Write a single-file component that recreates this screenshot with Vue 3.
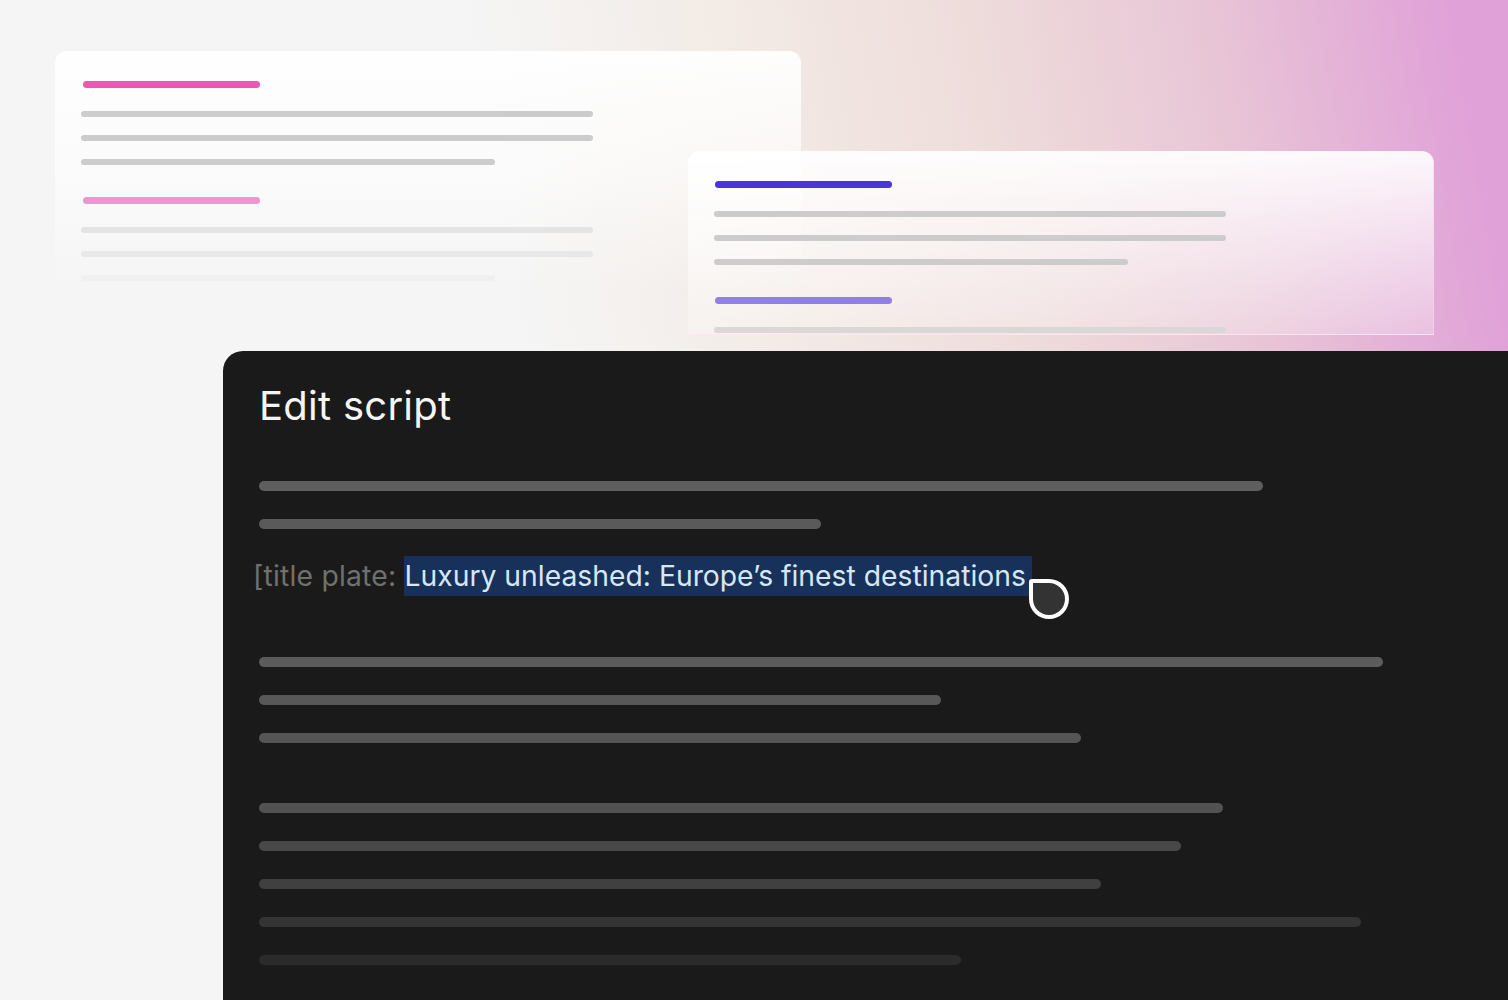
<template>
  <div class="stage">
    <div class="card card-back">
      <template v-for="(group, g) in backGroups" :key="g">
        <div class="heading" :class="group.tone"></div>
        <div class="rows">
          <div v-for="(row, i) in group.rows" :key="i" class="row" :class="row.tone" :style="{ width: row.width + 'px' }"></div>
        </div>
      </template>
    </div>

    <div class="card card-front">
      <template v-for="(group, g) in frontGroups" :key="g">
        <div class="heading" :class="group.tone"></div>
        <div class="rows">
          <div v-for="(row, i) in group.rows" :key="i" class="row" :class="row.tone" :style="{ width: row.width + 'px' }"></div>
        </div>
      </template>
    </div>

    <section class="editor">
      <h1>Edit script</h1>
      <div class="lines lines-first">
        <div v-for="(line, i) in firstLines" :key="i" class="line" :style="{ width: line.width + 'px', background: line.color }"></div>
      </div>
      <p class="script-line">
        <span class="bracket">[title plate: </span><span class="selected">Luxury unleashed: Europe’s finest destinations<span class="cursor"></span></span>
      </p>
      <div class="lines lines-second">
        <div v-for="(line, i) in secondLines" :key="i" class="line" :style="{ width: line.width + 'px', background: line.color }"></div>
      </div>
      <div class="lines lines-third">
        <div v-for="(line, i) in thirdLines" :key="i" class="line" :style="{ width: line.width + 'px', background: line.color }"></div>
      </div>
    </section>
  </div>
</template>

<script setup>
const backGroups = [
  {
    tone: 'pink',
    rows: [{ width: 512 }, { width: 512 }, { width: 414 }],
  },
  {
    tone: 'pink-soft',
    rows: [
      { width: 512, tone: 'faint' },
      { width: 512, tone: 'fainter' },
      { width: 414, tone: 'faintest' },
    ],
  },
]

const frontGroups = [
  {
    tone: 'indigo',
    rows: [{ width: 512 }, { width: 512 }, { width: 414 }],
  },
  {
    tone: 'indigo-soft',
    rows: [{ width: 512, tone: 'muted' }],
  },
]

const firstLines = [
  { width: 1004, color: '#5e5e5e' },
  { width: 562, color: '#5a5a5a' },
]

const secondLines = [
  { width: 1124, color: '#5c5c5c' },
  { width: 682, color: '#585858' },
  { width: 822, color: '#555555' },
]

const thirdLines = [
  { width: 964, color: '#525252' },
  { width: 922, color: '#484848' },
  { width: 842, color: '#404040' },
  { width: 1102, color: '#343434' },
  { width: 702, color: '#2b2b2b' },
]
</script>

<style>
html,
body {
  margin: 0;
  background: #f5f5f5;
}
</style>

<style scoped>
.stage {
  width: 1508px;
  height: 1000px;
  overflow: hidden;
  padding-top: 51px;
  box-sizing: border-box;
  background: linear-gradient(80deg, #f5f5f5 38%, #f3ece7 52%, #eedcdb 68%, #e8c5d6 82%, #e0a0d8 97%);
  font-family: Inter, "Liberation Sans", sans-serif;
}

.card {
  width: 746px;
  box-sizing: border-box;
  padding: 28px 0 0 26px;
  border-radius: 12px 12px 0 0;
  overflow: hidden;
}

.card-back {
  height: 240px;
  margin-left: 55px;
  background: linear-gradient(180deg, rgba(255, 255, 255, 0.95) 0%, rgba(255, 255, 255, 0.6) 50%, rgba(255, 255, 255, 0) 100%);
}

.card-front {
  height: 184px;
  margin-left: 688px;
  margin-top: -140px;
  position: relative;
  background: linear-gradient(180deg, rgba(255, 255, 255, 0.92) 0%, rgba(255, 255, 255, 0.25) 100%);
  border-right: 1px solid rgba(255, 210, 240, 0.6);
  border-bottom: 1px solid rgba(255, 210, 240, 0.6);
}

.heading {
  width: 177px;
  height: 7px;
  margin: 2px 0 0 2px;
  border-radius: 3.5px;
}

.card-front .heading {
  margin-left: 1px;
}

.pink { background: #e958b4; }
.pink-soft { background: #f095d2; }
.indigo { background: #4a35d6; }
.indigo-soft { background: #9080e2; }

.rows {
  display: flex;
  flex-direction: column;
  gap: 18px;
  margin-top: 23px;
  margin-bottom: 32px;
}

.row {
  height: 6px;
  border-radius: 3px;
  background: #cccccc;
}

.row.muted { background: #dbd7d6; }
.row.faint { background: #e4e4e4; }
.row.fainter { background: #e8e8e8; }
.row.faintest { background: #f0f0f0; }

.editor {
  height: 649px;
  margin-left: 223px;
  margin-top: 16px;
  box-sizing: border-box;
  padding: 35px 0 0 36px;
  position: relative;
  background: #1a1a1a;
  border-radius: 20px 0 0 0;
}

.editor h1 {
  margin: 0;
  font-size: 40px;
  line-height: 40px;
  font-weight: 400;
  letter-spacing: 0.27px;
  color: #f5f5f5;
}

.lines {
  display: flex;
  flex-direction: column;
  gap: 28px;
}

.lines-first {
  margin-top: 55px;
}

.lines-second {
  margin-top: 61px;
}

.lines-third {
  margin-top: 60px;
}

.line {
  height: 10px;
  border-radius: 5px;
}

.script-line {
  margin: 27px 0 0 -6px;
  font-size: 28.3px;
  line-height: 40px;
  white-space: pre;
}

.bracket {
  color: #707070;
  letter-spacing: 0.2px;
}

.selected {
  display: inline-block;
  position: relative;
  padding: 0 6px 0 0;
  background: #17315a;
  color: #d8e6f5;
}

.cursor {
  position: absolute;
  right: -37px;
  top: 23px;
  width: 32px;
  height: 32px;
  border: 4px solid #ffffff;
  border-radius: 3px 50% 50% 50%;
  background: #333333;
}
</style>
